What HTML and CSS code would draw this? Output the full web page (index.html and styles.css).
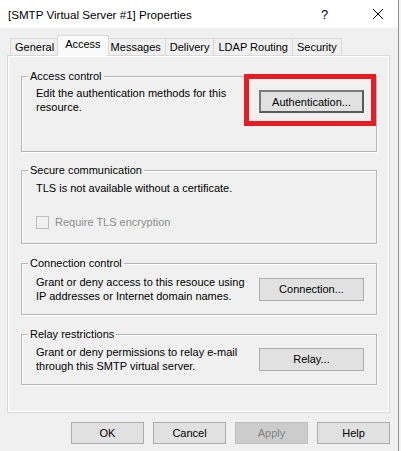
FILE: index.html
```html
<!DOCTYPE html>
<html>
<head>
  <meta charset="UTF-8">
  <title>[SMTP Virtual Server #1] Properties</title>
  <link rel="stylesheet" href="styles.css">
</head>
<body>
  <div class="window">
    <div class="titlebar">
      <span class="title">[SMTP Virtual Server #1] Properties</span>
      <span class="help">?</span>
      <span class="close">
        <svg width="12" height="12" viewBox="0 0 12 12"><path d="M1 1 L11 11 M11 1 L1 11" stroke="#000" stroke-width="1" fill="none"/></svg>
      </span>
    </div>

    <div class="tabs">
      <div class="tab">General</div>
      <div class="tab active">Access</div>
      <div class="tab">Messages</div>
      <div class="tab">Delivery</div>
      <div class="tab">LDAP Routing</div>
      <div class="tab">Security</div>
    </div>

    <div class="page">
      <fieldset class="group g-access">
        <legend>Access control</legend>
        <div class="row top">
          <p>Edit the authentication methods for this<br>resource.</p>
          <button class="btn default">Authentication...</button>
        </div>
      </fieldset>

      <fieldset class="group g-secure">
        <legend>Secure communication</legend>
        <p class="note">TLS is not available without a certificate.</p>
        <label class="check disabled"><span class="box"></span>Require TLS encryption</label>
      </fieldset>

      <fieldset class="group g-conn">
        <legend>Connection control</legend>
        <div class="row">
          <p>Grant or deny access to this resouce using<br>IP addresses or Internet domain names.</p>
          <button class="btn">Connection...</button>
        </div>
      </fieldset>

      <fieldset class="group g-relay">
        <legend>Relay restrictions</legend>
        <div class="row">
          <p>Grant or deny permissions to relay e-mail<br>through this SMTP virtual server.</p>
          <button class="btn">Relay...</button>
        </div>
      </fieldset>

      <!-- red annotation drawn over the first group -->
      <div class="highlight"></div>
    </div>

    <div class="footer">
      <button class="btn">OK</button>
      <button class="btn">Cancel</button>
      <button class="btn" disabled>Apply</button>
      <button class="btn">Help</button>
    </div>
  </div>
</body>
</html>
```

FILE: styles.css
```css
body {
  margin: 0;
  background: #f4f4f4;
  font-family: "Liberation Sans", Arial, sans-serif;
  font-size: 11px;
  color: #000;
}
.window {
  width: 399px;
  height: 451px;
  overflow: hidden;
  box-sizing: border-box;
  border-right: 1px solid #8f8f8f;
  background: #f0f0f0;
}
.titlebar {
  height: 28px;
  background: #fff;
  display: flex;
  align-items: center;
}
.title {
  font-size: 11.6px;
  padding-left: 8px;
  flex: 1;
}
.help {
  font-size: 13px;
  width: 12px;
  margin-right: 39px;
}
.close {
  width: 12px;
  height: 12px;
  margin-right: 14px;
  display: flex;
}
.tabs {
  height: 27px;
  display: flex;
  align-items: flex-end;
  padding-left: 10px;
}
.tab {
  height: 17px;
  line-height: 16px;
  padding: 0 4px;
  border: 1px solid #d9d9d9;
  border-bottom: none;
  border-left: none;
  box-sizing: border-box;
  background: #f0f0f0;
}
.tab:first-child {
  border-left: 1px solid #d9d9d9;
}
.tab.active {
  height: 21px;
  line-height: 17px;
  margin: 0 -2px -1px -2px;
  padding: 0 7px;
  border-left: 1px solid #d9d9d9;
  background: #f9f9f9;
  position: relative;
  z-index: 1;
}
.page {
  position: relative;
  margin-left: 7px;
  width: 383px;
  height: 358px;
  box-sizing: border-box;
  border: 1px solid #d9d9d9;
  box-shadow: inset 0 0 0 1px #fff;
  padding: 14px 12px 0 13px;
}
.group {
  margin: 0;
  padding: 0 0 0 6px;
  border: 1px solid #b4b4b4;
  box-shadow: inset 1px 1px 0 #fff, 1px 1px 0 #fff;
  box-sizing: border-box;
  min-width: 0;
}
.group legend {
  padding: 0 2px;
  line-height: 13px;
}
.g-access { height: 82px; }
.g-secure { height: 80px; margin-top: 12px; }
.g-conn { height: 58px; margin-top: 13px; }
.g-relay { height: 57px; margin-top: 13px; }
.row {
  display: flex;
  justify-content: space-between;
  align-items: center;
  padding: 5px 12px 0 8px;
}
.g-relay .row {
  padding-top: 4px;
}
.row.top {
  align-items: flex-start;
  padding-top: 3px;
}
.row.top .btn {
  margin-top: 4px;
}
p {
  margin: 0;
  line-height: 14px;
}
.note {
  padding: 4px 0 0 8px;
}
.check {
  display: flex;
  align-items: center;
  margin: 20px 0 0 8px;
  height: 14px;
}
.check.disabled {
  color: #8d8d8d;
}
.check .box {
  width: 13px;
  height: 13px;
  box-sizing: border-box;
  border: 1px solid #bcbcbc;
  background: #f0f0f0;
  margin-right: 6px;
}
.btn {
  font-family: "Liberation Sans", Arial, sans-serif;
  font-size: 11px;
  color: #000;
  background: #e1e1e1;
  border: 1px solid #adadad;
  width: 105px;
  height: 23px;
  padding: 0;
  box-sizing: border-box;
}
.btn.default {
  border: 2px solid #7a7a7a;
  border-right-color: #5a5a5a;
  border-bottom-color: #5a5a5a;
}
.btn:disabled {
  background: #cccccc;
  border-color: #bfbfbf;
  color: #838383;
}
.highlight {
  position: absolute;
  left: 236px;
  top: 18px;
  width: 132px;
  height: 52px;
  box-sizing: border-box;
  border: 5px solid #e81c24;
}
.footer {
  display: flex;
  justify-content: flex-end;
  gap: 9px;
  padding: 9px 8px 0 0;
}
.footer .btn {
  width: 73px;
  height: 22px;
}
```
